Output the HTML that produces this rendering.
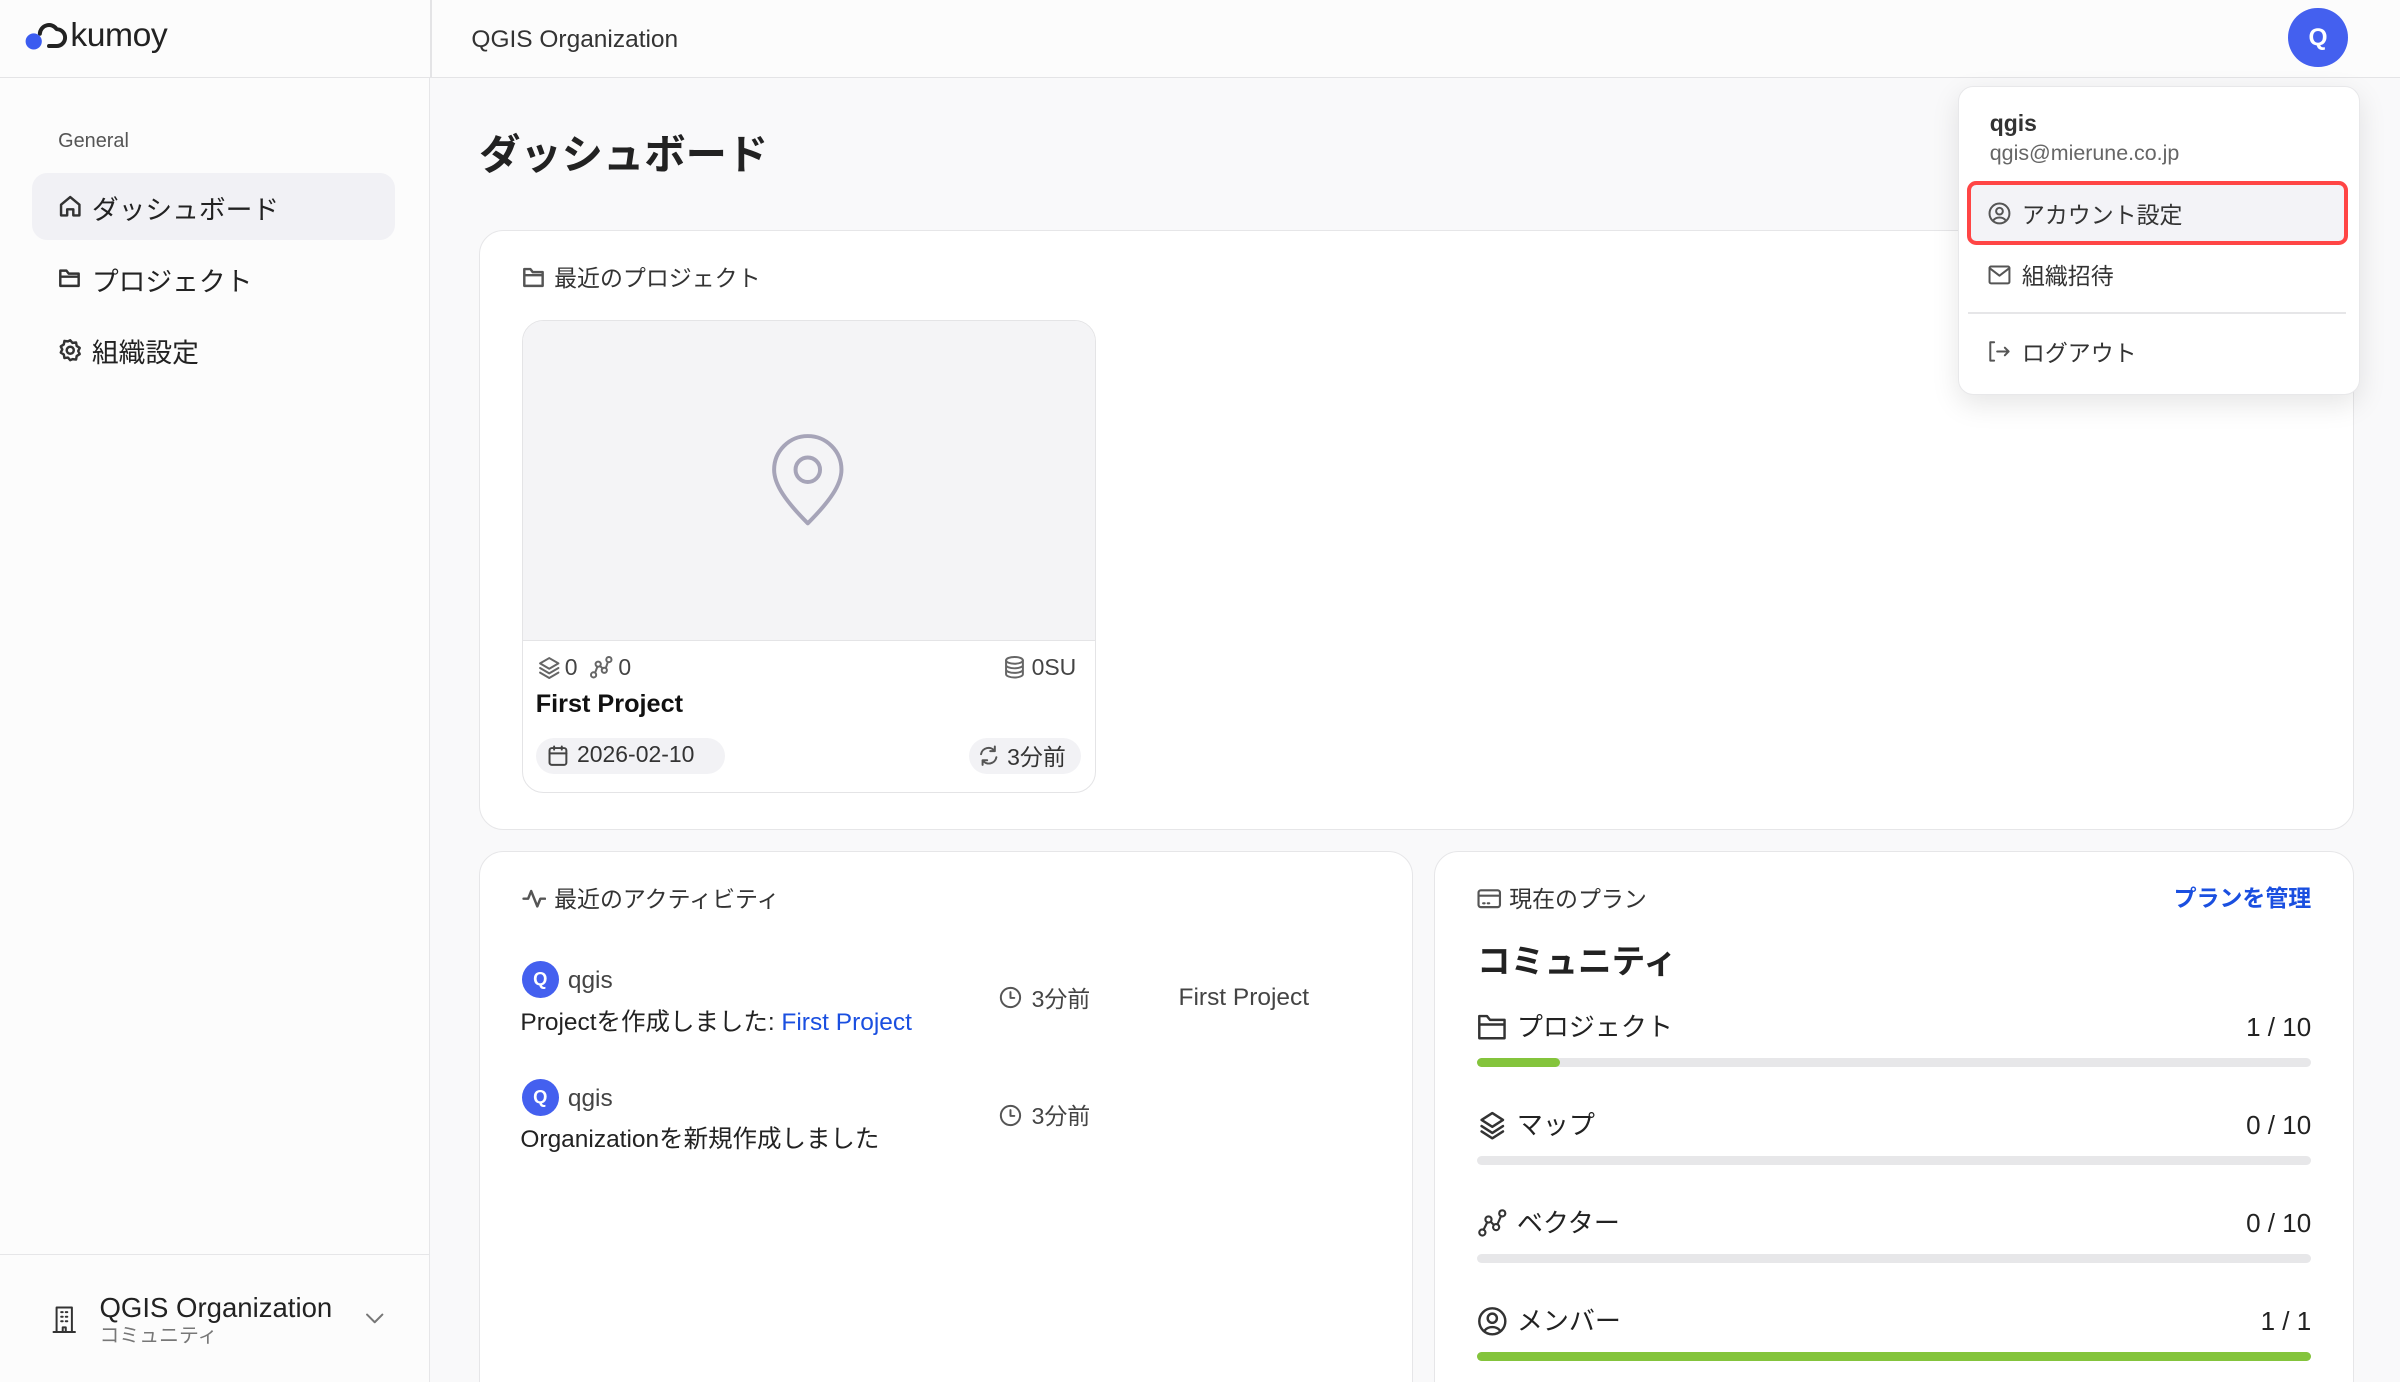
<!DOCTYPE html>
<html><head><meta charset="utf-8">
<style>
*{box-sizing:border-box;margin:0;padding:0}
html,body{width:2400px;height:1382px;overflow:hidden;background:#f9f9fa}
#z{zoom:1.5306;width:1568px;height:903px;position:relative;font-family:"Liberation Sans","Noto Sans CJK JP",sans-serif;color:#222}
.a{position:absolute;white-space:nowrap}
.ic{position:absolute;fill:none;stroke:#555;stroke-width:1.6;stroke-linecap:round;stroke-linejoin:round}
.card{position:absolute;background:#fff;border:1px solid #e6e6e8;border-radius:16px}
.bar{position:absolute;left:965px;width:545px;height:6px;border-radius:3px;background:#e7e7e9}
.bar i{display:block;height:6px;border-radius:3px;background:#84c43c}
.av{position:absolute;width:24px;height:24px;border-radius:50%;background:#4460ef;color:#fff;font-size:12px;font-weight:bold;text-align:center;line-height:24px}
.sh{font-size:15px;color:#333}
</style></head><body><div id="z">
<div class="a" style="left:0;top:0;width:281px;height:903px;background:#fcfcfc;border-right:1px solid #e6e6e8"></div>
<div class="a" style="left:0;top:0;width:1568px;height:51px;background:#fcfcfc;border-bottom:1px solid #e4e4e6"></div>
<div class="a" style="left:281px;top:0;width:1px;height:51px;background:#e4e4e6"></div>
<svg class="ic" style="left:15px;top:13px;stroke:#222;stroke-width:2.6" width="30" height="20" viewBox="0 0 30 20"><path d="M11 9 a6 6 0 0 1 11 -3 a5 5 0 0 1 0 11 h-5"/><circle cx="7" cy="14" r="4" fill="#3b5cf0" stroke="#3b5cf0"/></svg>
<div class="a" style="left:46px;top:11px;font-size:22px;color:#222;letter-spacing:-0.3px">kumoy</div>
<div class="a" style="left:308px;top:17px;font-size:16px;color:#333">QGIS Organization</div>
<div class="a" style="left:1495px;top:5px;width:39px;height:39px;border-radius:50%;background:#4460ef;color:#fff;font-weight:bold;font-size:16px;text-align:center;line-height:39px">Q</div>

<div class="a" style="left:38px;top:85px;font-size:13px;color:#555">General</div>
<div class="a" style="left:21px;top:113px;width:237px;height:44px;border-radius:10px;background:#f1f1f5"></div>
<svg class="ic" style="left:38px;top:127px;stroke:#333" width="16" height="16" viewBox="0 0 16 16"><path d="M2 7 8 2 14 7V14H10V10H6V14H2Z"/></svg>
<div class="a" style="left:60px;top:123px;font-size:17.5px;color:#222">ダッシュボード</div>
<svg class="ic" style="left:38px;top:174px;stroke:#333" width="16" height="16" viewBox="0 0 16 16"><path d="M1.5 3h4l1.5 2h6.5v8h-12z M1.5 7h12"/></svg>
<div class="a" style="left:60px;top:170px;font-size:17.5px;color:#222">プロジェクト</div>
<svg class="ic" style="left:38px;top:221px;stroke:#333" width="16" height="16" viewBox="0 0 16 16"><circle cx="8" cy="8" r="2.3"/><path d="M8 1.5l1.5 1.7 2.3-.3.4 2.3 2 1.3-1 2 1 2-2 1.3-.4 2.3-2.3-.3L8 14.5l-1.5-1.7-2.3.3-.4-2.3-2-1.3 1-2-1-2 2-1.3.4-2.3 2.3.3z"/></svg>
<div class="a" style="left:60px;top:216px;font-size:17.5px;color:#222">組織設定</div>

<div class="a" style="left:0;top:819px;width:281px;height:1px;background:#e6e6e8"></div>
<svg class="ic" style="left:34px;top:853px;stroke:#333;stroke-width:1.3" width="16" height="18" viewBox="0 0 16 18"><path d="M3 1h10v16H3z M1 17h14 M6 4h1M9 4h1M6 7h1M9 7h1M6 10h1M9 10h1 M7 17v-3h2v3"/></svg>
<div class="a" style="left:65px;top:844px;font-size:18px;color:#222">QGIS Organization</div>
<div class="a" style="left:65px;top:862px;font-size:13px;color:#777">コミュニティ</div>
<svg class="ic" style="left:238px;top:856px;stroke:#777;stroke-width:1.3" width="14" height="10" viewBox="0 0 14 10"><path d="M2 3l5 5 5-5"/></svg>

<div class="a" style="left:313px;top:79px;font-size:27px;font-weight:bold;color:#222">ダッシュボード</div>

<div class="card" style="left:313px;top:150px;width:1225px;height:392px"></div>
<svg class="ic" style="left:341px;top:174px" width="16" height="15" viewBox="0 0 16 15"><path d="M1.5 2h4l1.5 2h6.5v9h-12z M1.5 6h12"/></svg>
<div class="a sh" style="left:362px;top:169px">最近のプロジェクト</div>
<div class="a" style="left:341px;top:209px;width:375px;height:309px;border:1px solid #e4e4e6;border-radius:14px;background:#fff;overflow:hidden">
 <div style="height:209px;background:#f4f4f6;border-bottom:1px solid #e4e4e6"></div>
</div>
<svg class="ic" style="left:502px;top:283px;stroke:#a6a4b8;stroke-width:2.6" width="52" height="62" viewBox="0 0 52 62"><path d="M26 59C12 45 4 34 4 24a22 22 0 0 1 44 0c0 10-8 21-22 35z"/><circle cx="26" cy="24" r="8"/></svg>
<svg class="ic" style="left:351px;top:428px;stroke:#666;stroke-width:1.3" width="16" height="16" viewBox="0 0 16 16"><path d="M8 2l6 3.5-6 3.5-6-3.5z M2 8.5l6 3.5 6-3.5 M2 11.5l6 3.5 6-3.5"/></svg>
<div class="a" style="left:369px;top:427px;font-size:15px;color:#444">0</div>
<svg class="ic" style="left:385px;top:428px;stroke:#666;stroke-width:1.3" width="16" height="16" viewBox="0 0 16 16"><circle cx="3" cy="13" r="1.7"/><circle cx="6" cy="6" r="1.7"/><circle cx="10" cy="10" r="1.7"/><circle cx="13" cy="3" r="1.7"/><path d="M4 11.5 5.5 7.6M7.2 7.2 9 8.8M11 8.5l1.3-3.9"/></svg>
<div class="a" style="left:404px;top:427px;font-size:15px;color:#444">0</div>
<svg class="ic" style="left:655px;top:428px;stroke:#666;stroke-width:1.3" width="15" height="16" viewBox="0 0 15 16"><ellipse cx="7.5" cy="3.5" rx="5.5" ry="2.2"/><path d="M2 3.5v9c0 1.2 2.5 2.2 5.5 2.2s5.5-1 5.5-2.2v-9M2 6.5c0 1.2 2.5 2.2 5.5 2.2S13 7.7 13 6.5M2 9.5c0 1.2 2.5 2.2 5.5 2.2S13 10.7 13 9.5"/></svg>
<div class="a" style="left:674px;top:427px;font-size:15px;color:#444">0SU</div>
<div class="a" style="left:350px;top:451px;font-size:16.5px;font-weight:bold;color:#111">First Project</div>
<div class="a" style="left:350px;top:482px;width:124px;height:24px;border-radius:12px;background:#f2f2f5"></div>
<svg class="ic" style="left:358px;top:487px;stroke:#444;stroke-width:1.3" width="13" height="14" viewBox="0 0 13 14"><rect x="1" y="2" width="11" height="11" rx="1.5"/><path d="M1 5.5h11M4 1v2M9 1v2"/></svg>
<div class="a" style="left:377px;top:484px;font-size:15px;color:#333">2026-02-10</div>
<div class="a" style="left:633px;top:482px;width:73px;height:24px;border-radius:12px;background:#f2f2f5"></div>
<svg class="ic" style="left:639px;top:487px;stroke:#555;stroke-width:1.3" width="14" height="14" viewBox="0 0 14 14"><path d="M2 6a5 5 0 0 1 9-2M12 8a5 5 0 0 1-9 2M11 1v3H8M3 13v-3h3"/></svg>
<div class="a" style="left:658px;top:482px;font-size:15px;color:#333">3分前</div>

<div class="card" style="left:313px;top:556px;width:610px;height:370px"></div>
<svg class="ic" style="left:341px;top:580px" width="16" height="14" viewBox="0 0 16 14"><path d="M1 7h3l2-5 4 10 2-5h3"/></svg>
<div class="a sh" style="left:362px;top:575px">最近のアクティビティ</div>
<div class="av" style="left:341px;top:628px">Q</div>
<div class="a" style="left:371px;top:632px;font-size:16px;color:#444">qgis</div>
<div class="a" style="left:340px;top:655px;font-size:16px;color:#222">Projectを作成しました: <span style="color:#1a4fe0">First Project</span></div>
<svg class="ic" style="left:653px;top:644px;stroke:#555;stroke-width:1.3" width="15" height="15" viewBox="0 0 15 15"><circle cx="7.5" cy="7.5" r="6.3"/><path d="M7.5 4v3.8h2.5"/></svg>
<div class="a" style="left:674px;top:640px;font-size:15px;color:#444">3分前</div>
<div class="a" style="left:770px;top:643px;font-size:16px;color:#444">First Project</div>
<div class="av" style="left:341px;top:705px">Q</div>
<div class="a" style="left:371px;top:709px;font-size:16px;color:#444">qgis</div>
<div class="a" style="left:340px;top:732px;font-size:16px;color:#222">Organizationを新規作成しました</div>
<svg class="ic" style="left:653px;top:721px;stroke:#555;stroke-width:1.3" width="15" height="15" viewBox="0 0 15 15"><circle cx="7.5" cy="7.5" r="6.3"/><path d="M7.5 4v3.8h2.5"/></svg>
<div class="a" style="left:674px;top:717px;font-size:15px;color:#444">3分前</div>

<div class="card" style="left:937px;top:556px;width:601px;height:370px"></div>
<svg class="ic" style="left:965px;top:580px;stroke-width:1.4" width="16" height="14" viewBox="0 0 16 14"><rect x="1" y="1.5" width="14" height="11" rx="1.5"/><path d="M1 5h14M4 10h1M7 10h1"/></svg>
<div class="a sh" style="left:986px;top:575px">現在のプラン</div>
<div class="a" style="right:58px;top:574px;font-size:15px;color:#1a4fe0;font-weight:bold">プランを管理</div>
<div class="a" style="left:965px;top:610px;font-size:22px;font-weight:bold;color:#222">コミュニティ</div>

<svg class="ic" style="left:965px;top:662px;stroke:#333" width="20" height="18" viewBox="0 0 20 18"><path d="M1.5 2h5l2 2.5h9.5v12h-16.5z M1.5 7.5h16.5"/></svg>
<div class="a" style="left:991px;top:658px;font-size:17px;color:#222">プロジェクト</div>
<div class="a" style="right:58px;top:661px;font-size:17px;color:#222">1 / 10</div>
<div class="bar" style="top:691px"><i style="width:54px"></i></div>

<svg class="ic" style="left:965px;top:725px;stroke:#333" width="20" height="20" viewBox="0 0 20 20"><path d="M10 2l7 4.5-7 4.5-7-4.5z M3 10.5l7 4.5 7-4.5 M3 14l7 4.5 7-4.5"/></svg>
<div class="a" style="left:991px;top:722px;font-size:17px;color:#222">マップ</div>
<div class="a" style="right:58px;top:725px;font-size:17px;color:#222">0 / 10</div>
<div class="bar" style="top:755px"></div>

<svg class="ic" style="left:965px;top:789px;stroke:#333;stroke-width:1.4" width="20" height="20" viewBox="0 0 20 20"><circle cx="3.5" cy="16" r="2"/><circle cx="7.5" cy="7.5" r="2"/><circle cx="12.5" cy="12.5" r="2"/><circle cx="16.5" cy="3.5" r="2"/><path d="M4.3 14.2 6.7 9.3M9 9l2 2M13.3 10.7l2.4-5.4"/></svg>
<div class="a" style="left:991px;top:786px;font-size:17px;color:#222">ベクター</div>
<div class="a" style="right:58px;top:789px;font-size:17px;color:#222">0 / 10</div>
<div class="bar" style="top:819px"></div>

<svg class="ic" style="left:965px;top:853px;stroke:#333" width="20" height="20" viewBox="0 0 20 20"><circle cx="10" cy="10" r="8.5"/><circle cx="10" cy="8" r="3"/><path d="M5 16a6 5 0 0 1 10 0"/></svg>
<div class="a" style="left:991px;top:850px;font-size:17px;color:#222">メンバー</div>
<div class="a" style="right:58px;top:853px;font-size:17px;color:#222">1 / 1</div>
<div class="bar" style="top:883px"><i style="width:545px"></i></div>

<div class="a" style="left:1279px;top:56px;width:263px;height:202px;background:#fff;border:1px solid #e8e8ea;border-radius:10px;box-shadow:0 6px 18px rgba(0,0,0,.10)"></div>
<div class="a" style="left:1300px;top:72px;font-size:15px;font-weight:bold;color:#333">qgis</div>
<div class="a" style="left:1300px;top:92px;font-size:14px;color:#666">qgis@mierune.co.jp</div>
<div class="a" style="left:1285px;top:118px;width:249px;height:42px;border:3px solid #ff4545;border-radius:6px;background:#f3f3f7"></div>
<svg class="ic" style="left:1299px;top:132px;stroke:#555;stroke-width:1.3" width="15" height="15" viewBox="0 0 15 15"><circle cx="7.5" cy="7.5" r="6.5"/><circle cx="7.5" cy="6" r="2.2"/><path d="M3.5 12a4.5 3.5 0 0 1 8 0"/></svg>
<div class="a" style="left:1321px;top:128px;font-size:15px;color:#333">アカウント設定</div>
<svg class="ic" style="left:1299px;top:173px;stroke:#555;stroke-width:1.3" width="15" height="13" viewBox="0 0 15 13"><rect x="1" y="1" width="13" height="11" rx="1"/><path d="M1 2l6.5 5L14 2"/></svg>
<div class="a" style="left:1321px;top:168px;font-size:15px;color:#333">組織招待</div>
<div class="a" style="left:1286px;top:204px;width:247px;height:1px;background:#e6e6e8"></div>
<svg class="ic" style="left:1299px;top:222px;stroke:#555;stroke-width:1.3" width="15" height="15" viewBox="0 0 15 15"><path d="M4 1.5H1.5v12H4M6 7.5h7.5M11 5l2.5 2.5L11 10"/></svg>
<div class="a" style="left:1321px;top:218px;font-size:15px;color:#333">ログアウト</div>
</div></body></html>
